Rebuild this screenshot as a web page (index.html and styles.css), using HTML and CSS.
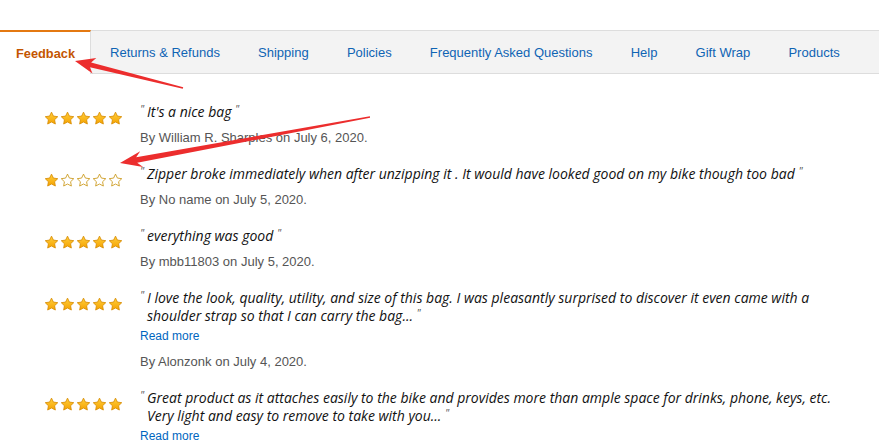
FILE: index.html
```html
<!DOCTYPE html>
<html>
<head>
<meta charset="utf-8">
<link rel="stylesheet" href="styles.css">
</head>
<body>
<svg width="0" height="0" class="defs">
  <defs>
    <linearGradient id="gold" x1="0" y1="0" x2="0" y2="1">
      <stop offset="0" stop-color="#ffce3d"/>
      <stop offset="1" stop-color="#f5a300"/>
    </linearGradient>
    <symbol id="sfull" viewBox="0 0 24 24">
      <path d="M12 1.8l3.05 6.3 6.95 1-5.05 4.85 1.2 6.9L12 17.6l-6.15 3.25 1.2-6.9L2 9.1l6.95-1z" fill="url(#gold)" stroke="#d68a00" stroke-width="1.3" stroke-linejoin="round"/>
    </symbol>
    <symbol id="sempty" viewBox="0 0 24 24">
      <path d="M12 1.8l3.05 6.3 6.95 1-5.05 4.85 1.2 6.9L12 17.6l-6.15 3.25 1.2-6.9L2 9.1l6.95-1z" fill="#fff" stroke="#c8930e" stroke-width="1.3" stroke-linejoin="round"/>
    </symbol>
  </defs>
</svg>
<div class="page">
  <nav class="tabs">
    <a class="tab active">Feedback</a>
    <a class="tab">Returns &amp; Refunds</a>
    <a class="tab">Shipping</a>
    <a class="tab">Policies</a>
    <a class="tab">Frequently Asked Questions</a>
    <a class="tab">Help</a>
    <a class="tab">Gift Wrap</a>
    <a class="tab">Products</a>
  </nav>

  <ul class="reviews">
    <li class="review">
      <div class="stars"><svg><use href="#sfull"/></svg><svg><use href="#sfull"/></svg><svg><use href="#sfull"/></svg><svg><use href="#sfull"/></svg><svg><use href="#sfull"/></svg></div>
      <div class="body">
        <p class="quote"><span class="q">"</span>It's a nice bag <span class="q">"</span></p>
        <p class="by">By William R. Sharples on July 6, 2020.</p>
      </div>
    </li>
    <li class="review">
      <div class="stars"><svg><use href="#sfull"/></svg><svg><use href="#sempty"/></svg><svg><use href="#sempty"/></svg><svg><use href="#sempty"/></svg><svg><use href="#sempty"/></svg></div>
      <div class="body">
        <p class="quote"><span class="q">"</span>Zipper broke immediately when after unzipping it . It would have looked good on my bike though too bad <span class="q">"</span></p>
        <p class="by">By No name on July 5, 2020.</p>
      </div>
    </li>
    <li class="review">
      <div class="stars"><svg><use href="#sfull"/></svg><svg><use href="#sfull"/></svg><svg><use href="#sfull"/></svg><svg><use href="#sfull"/></svg><svg><use href="#sfull"/></svg></div>
      <div class="body">
        <p class="quote"><span class="q">"</span>everything was good <span class="q">"</span></p>
        <p class="by">By mbb11803 on July 5, 2020.</p>
      </div>
    </li>
    <li class="review">
      <div class="stars"><svg><use href="#sfull"/></svg><svg><use href="#sfull"/></svg><svg><use href="#sfull"/></svg><svg><use href="#sfull"/></svg><svg><use href="#sfull"/></svg></div>
      <div class="body">
        <p class="quote"><span class="q">"</span>I love the look, quality, utility, and size of this bag. I was pleasantly surprised to discover it even came with a shoulder strap so that I can carry the bag... <span class="q">"</span></p>
        <a class="more">Read more</a>
        <p class="by">By Alonzonk on July 4, 2020.</p>
      </div>
    </li>
    <li class="review">
      <div class="stars"><svg><use href="#sfull"/></svg><svg><use href="#sfull"/></svg><svg><use href="#sfull"/></svg><svg><use href="#sfull"/></svg><svg><use href="#sfull"/></svg></div>
      <div class="body">
        <p class="quote"><span class="q">"</span>Great product as it attaches easily to the bike and provides more than ample space for drinks, phone, keys, etc. Very light and easy to remove to take with you... <span class="q">"</span></p>
        <a class="more">Read more</a>
        <p class="by">By Alonzonk on July 4, 2020.</p>
      </div>
    </li>
  </ul>

  <svg class="annot" width="879" height="441" viewBox="0 0 879 441">
    <polygon fill="#ec2d2d" points="75,61 92.5,73.6 89.9,67.3 182.8,88.8 183.2,87.2 91.1,62.5 96.3,58.1"/>
    <polygon fill="#ec2d2d" points="120,163 143.1,166.9 137.2,162.7 370.1,117.8 369.9,116.2 136.2,157.2 140.2,151.2"/>
  </svg>
</div>
</body>
</html>
```

FILE: styles.css
```css
html, body {
  margin: 0;
  padding: 0;
  background: #fff;
  overflow: hidden;
}
.defs {
  position: absolute;
}
.page {
  position: relative;
  width: 879px;
  height: 441px;
  overflow: hidden;
  font-family: "Liberation Sans", Arial, sans-serif;
}
.tabs {
  display: flex;
  margin-top: 30px;
  height: 42px;
  background: #f3f3f3;
  border-top: 1px solid #dddddd;
  border-bottom: 1px solid #dddddd;
}
.tab {
  display: flex;
  align-items: center;
  padding: 0 19.1px;
  font-size: 13px;
  color: #0f64b4;
}
.tab.active {
  padding: 0 15px 0 16px;
  margin-top: -1px;
  margin-bottom: -1px;
  background: #fff;
  border-top: 2px solid #e47911;
  border-right: 1px solid #dddddd;
  color: #c45500;
  font-weight: bold;
  font-size: 12.8px;
}
.tab.active + .tab {
  padding-left: 19px;
}
.reviews {
  list-style: none;
  margin: 0;
  padding: 29px 0 0 0;
}
.review {
  display: flex;
  margin-bottom: 18px;
}
.stars {
  flex: none;
  display: flex;
  gap: 1px;
  width: 140px;
  padding-left: 44px;
  box-sizing: border-box;
  margin-top: 7.5px;
  height: 15px;
}
.stars svg {
  width: 15px;
  height: 15px;
  display: block;
  flex: none;
}
.body {
  flex: none;
  width: 710px;
}
.quote {
  margin: 0;
  font-family: "Open Sans", sans-serif;
  font-style: italic;
  font-size: 14px;
  line-height: 18px;
  color: #111;
  padding-left: 7px;
  text-indent: -7px;
}
.q {
  display: inline-block;
  text-indent: 0;
  width: 7px;
  font-size: 11px;
  font-style: italic;
  vertical-align: 4px;
  color: #555;
  line-height: 8px;
}
.quote .q:last-child {
  width: auto;
}
.more {
  display: block;
  margin-top: 2px;
  font-size: 12px;
  line-height: 18px;
  color: #0066c0;
}
.by {
  margin: 8px 0 0 0;
  font-size: 13px;
  line-height: 18px;
  color: #555;
}
.annot {
  position: absolute;
  left: 0;
  top: 0;
  pointer-events: none;
}
```
